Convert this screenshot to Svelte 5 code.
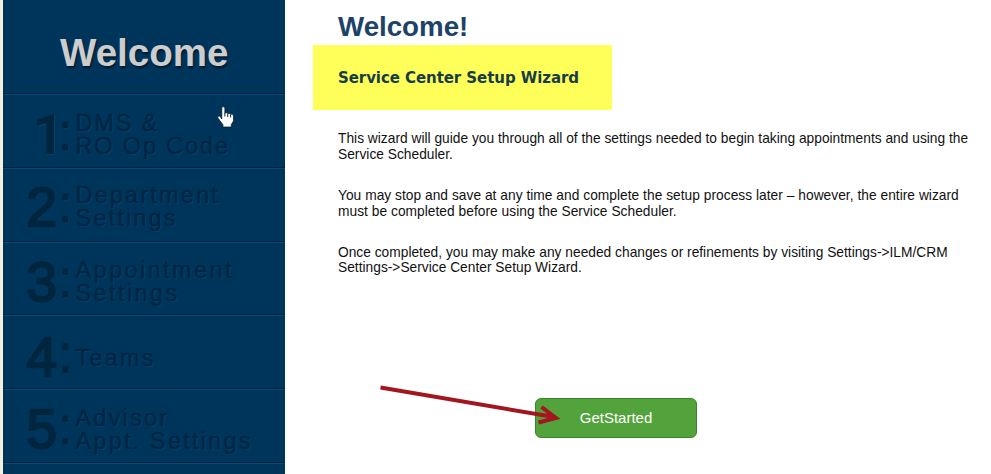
<script>
  const steps = [
    { n: '1', lines: ['DMS &', 'RO Op Code'], h: 74, d: 1, t: 1, x: 6, sp: 1.85 },
    { n: '2', lines: ['Department', 'Settings'], h: 74, d: -1, t: -1, x: 0, sp: 2.15 },
    { n: '3', lines: ['Appointment', 'Settings'], h: 73, d: 0, t: 0, x: 0, sp: 2.4 },
    { n: '4', lines: ['Teams'], h: 74, d: 2, t: 15, x: 0, sp: 2.2 },
    { n: '5', lines: ['Advisor', 'Appt. Settings'], h: 74, d: 0, t: 1, x: 0, sp: 2.2 }
  ];
</script>

<div class="page">
  <nav>
    <div class="step title"><span>Welcome</span></div>
    {#each steps as s}
      <div class="step" style="height:{s.h}px">
        <span class="num" class:one={s.n === '1'} style="padding-top:{11 + s.d}px;padding-left:{s.x}px">{s.n}</span>
        <span class="colon" class:large={s.lines.length === 1} style="padding-top:{7.5 + s.d}px">:</span>
        <span class="label" style="padding-top:{16 + s.t}px;letter-spacing:{s.sp}px">
          {#each s.lines as line}<span>{line}</span>{/each}
        </span>
      </div>
    {/each}
    <svg class="cursor" width="17" height="22" viewBox="0 0 16 22" preserveAspectRatio="none">
      <path d="M4.500 13V2.200C4.500.2 7.400.2 7.400 2.200V7.200C8.400 6.200 10 6.600 10.200 7.800C11.200 7 12.600 7.400 12.800 8.600C14 8 15.500 8.600 15.500 10.200V15L13.400 18.500V21H5.600V18.700L1 12.200C.1 10.500 1.700 9.400 3 10.500Z" fill="#fff" stroke="#001a30" stroke-width=".7" />
      <path d="M7.400 7V10.500M10.100 8V11M12.800 9V11.500" stroke="#111" stroke-width=".9" fill="none" />
    </svg>
  </nav>
  <main>
    <h1>Welcome!</h1>
    <div class="banner"><h2>Service Center Setup Wizard</h2></div>
    <p>This wizard will guide you through all of the settings needed to begin taking appointments and using the<br />Service Scheduler.</p>
    <p class="resume">You may stop and save at any time and complete the setup process later – however, the entire wizard<br />must be completed before using the Service Scheduler.</p>
    <p class="last">Once completed, you may make any needed changes or refinements by visiting Settings-&gt;ILM/CRM<br />Settings-&gt;Service Center Setup Wizard.</p>
    <div class="action">
      <button>GetStarted</button>
      <svg class="arrow" width="184" height="46" viewBox="0 0 184 46">
        <path d="M4.500 7.500L178 37M165.500 27L180 38L162.500 42.500" fill="none" stroke="#a3151f" stroke-width="4" />
      </svg>
    </div>
  </main>
</div>

<style>
  :global(body) { background: #fff; overflow: hidden; }
  .page { display: flex; width: 991px; height: 474px; overflow: hidden; background: #fff; font-family: "Liberation Sans", Arial, sans-serif; }
  nav { position: relative; box-sizing: border-box; flex: none; width: 285px; height: 474px; overflow: hidden; background: #00355b; border-left: 3px solid #f3f0df; }
  .step { box-sizing: border-box; display: flex; border-bottom: 1px solid #004b83; box-shadow: inset 0 -1px #00213c; color: #00263f; font-weight: bold; text-shadow: 1px 1px 1px #06426b; }
  .title { height: 95px; padding: 31px 0 0 57px; color: #cdcdcd; font-size: 38.5px; line-height: 44px; text-shadow: 1px 2px 2px #001a2d; }
  .num { box-sizing: border-box; width: 55px; text-indent: 23.5px; font-size: 55px; line-height: 56px; font-weight: normal; -webkit-text-stroke: 2.4px #00263f; }
  .num.one { font-family: Roboto, "Liberation Sans", sans-serif; font-weight: bold; -webkit-text-stroke: 0; }
  .colon { width: 16px; font-size: 53px; line-height: 56px; font-weight: normal; -webkit-text-stroke: .8px #00263f; }
  .colon.large { -webkit-text-stroke-width: 1.5px; }
  .label { display: flex; flex-direction: column; padding-left: 1.5px; font-size: 23.5px; line-height: 22.5px; white-space: nowrap; font-weight: normal; color: #002643; -webkit-text-stroke: .5px #002643; text-shadow: 1px 1px 1px #07436d; }
  .cursor { position: absolute; left: 214px; top: 106px; }
  main { flex: 1; padding-left: 28px; }
  h1 { margin: 0; height: 45px; box-sizing: border-box; padding: 11px 0 0 25px; font-size: 27.7px; line-height: 32px; color: #1d4369; }
  .banner { width: 299px; height: 65px; background: #ffff5a; box-sizing: border-box; padding: 24px 0 0 25px; margin-bottom: 21px; }
  h2 { margin: 0; font: bold 15px/19px "DejaVu Sans", Verdana, sans-serif; letter-spacing: -.07px; color: #183c46; white-space: nowrap; }
  p { margin: 0 0 26px 25px; font-size: 13.76px; letter-spacing: .01px; line-height: 15.5px; color: #111; white-space: nowrap; }
  .resume { letter-spacing: .03px; }
  .last { line-height: 15px; margin-bottom: 27px; }
  .action { position: relative; margin: 123px 0 0 222px; }
  button { display: block; width: 162px; height: 40px; padding: 0; border: 1px solid #3b832b; border-radius: 6px; background: #53a33c; color: #fff; font: 15px/38px "Liberation Sans", Arial, sans-serif; }
  .arrow { position: absolute; left: -159px; top: -18px; }
</style>
